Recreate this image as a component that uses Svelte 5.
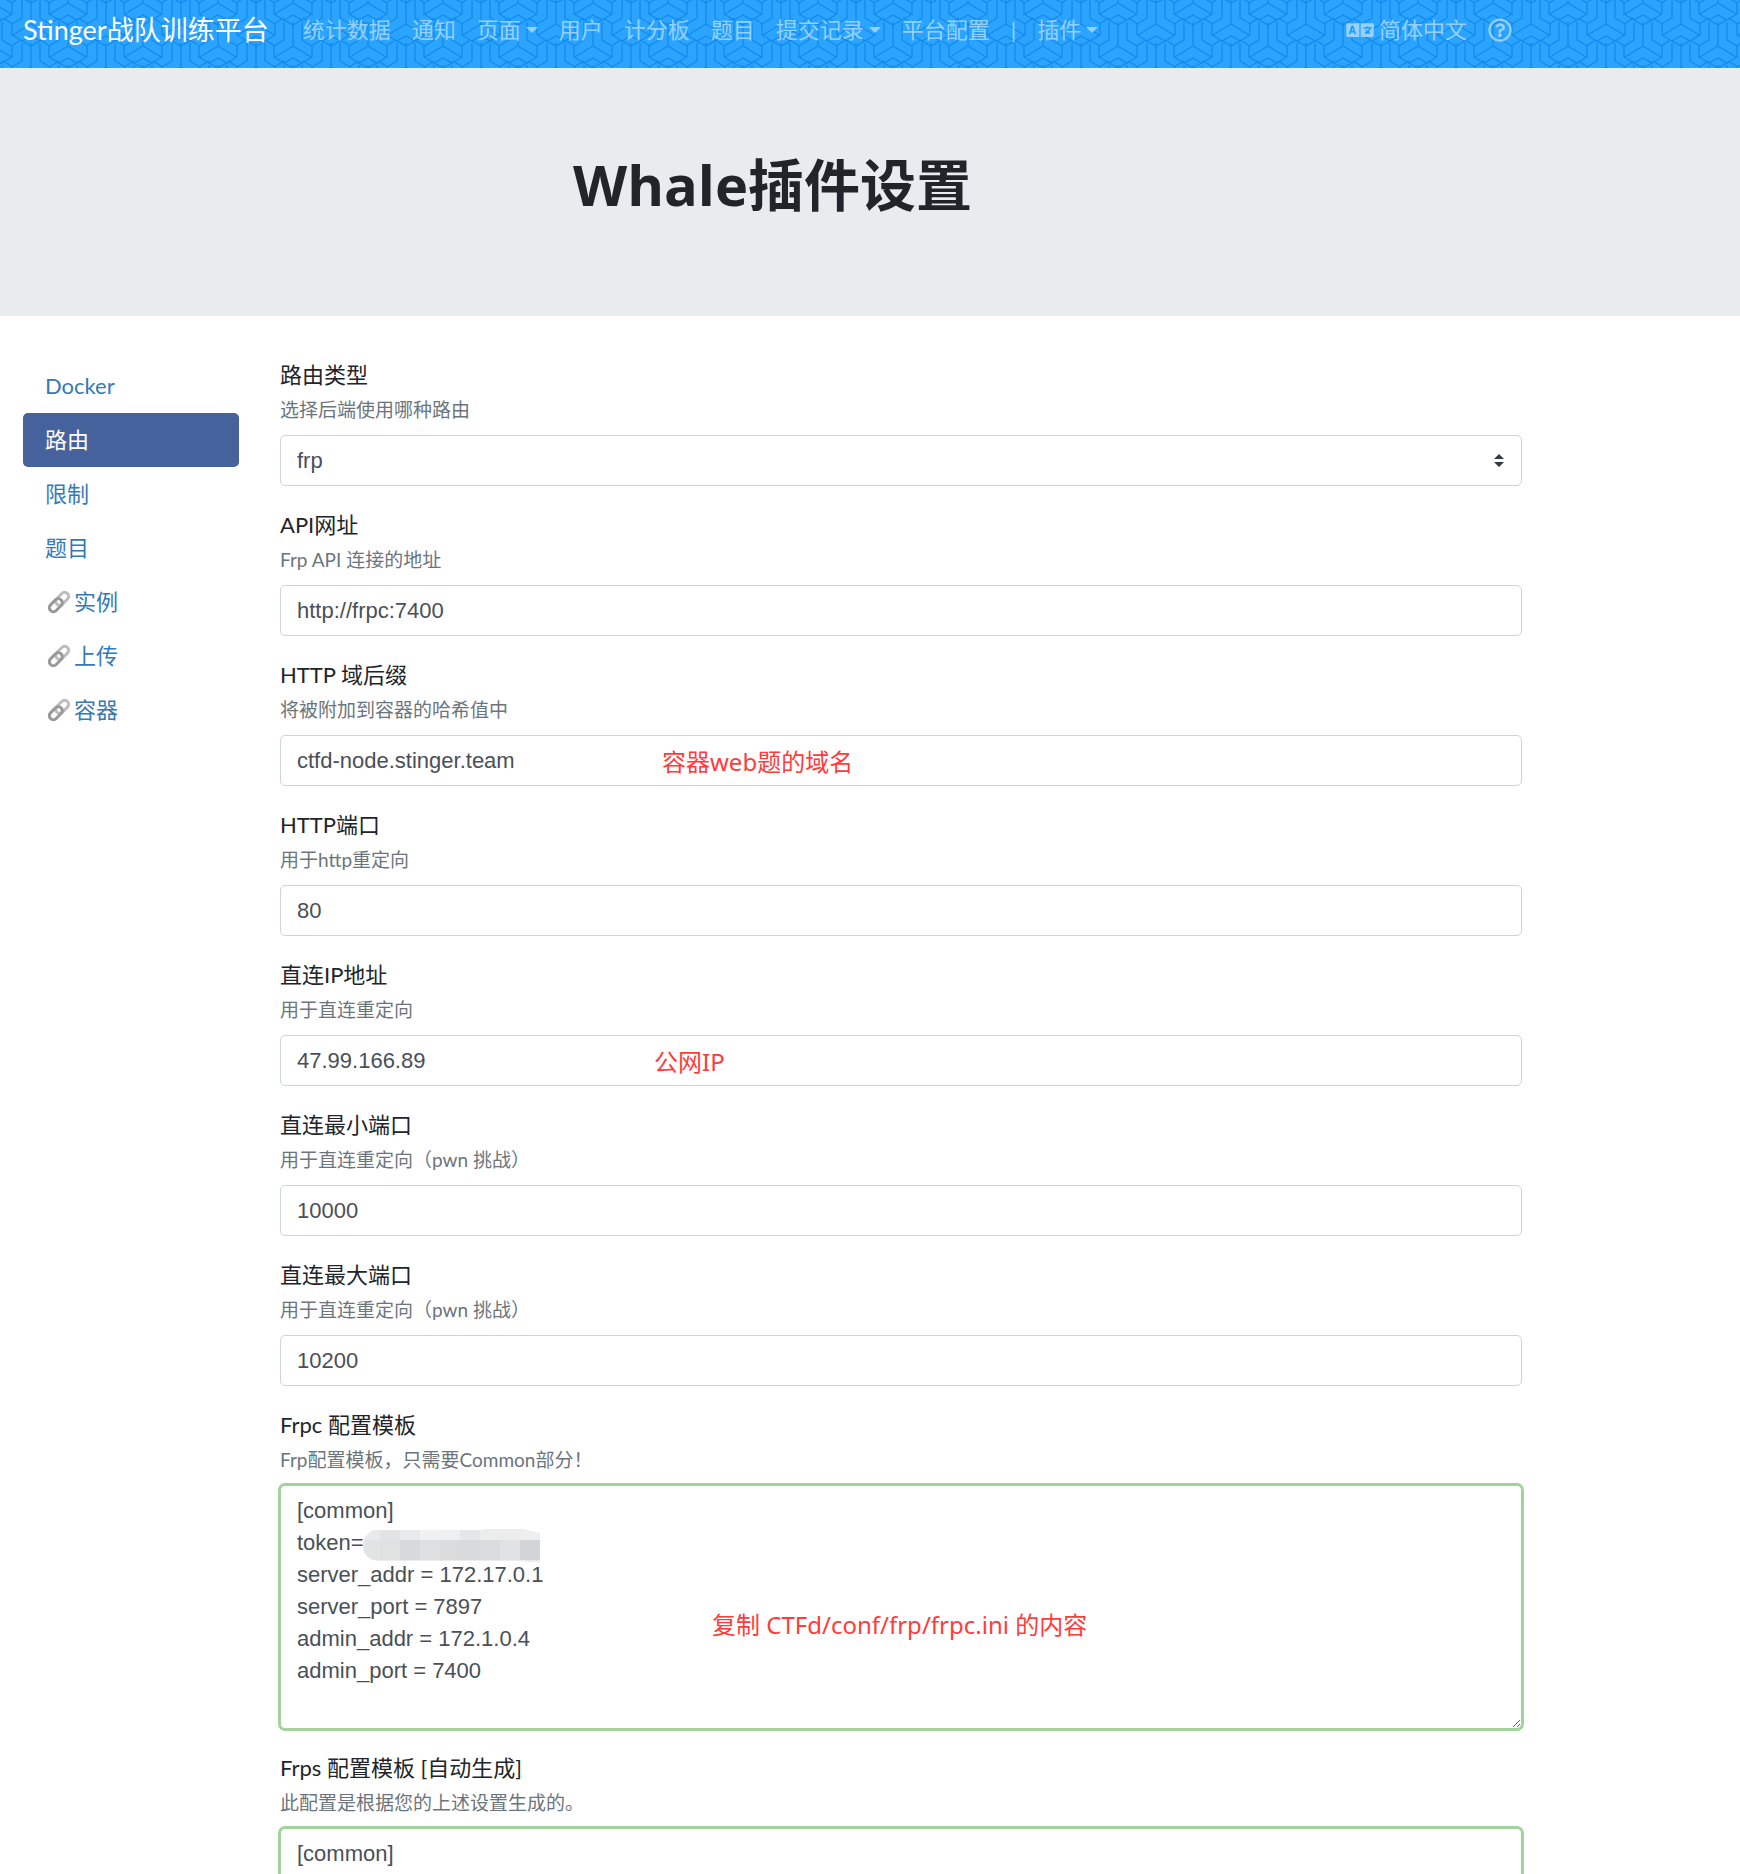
<script>
  const navLinks = [
    { text: '统计数据' },
    { text: '通知' },
    { text: '页面', menu: true },
    { text: '用户' },
    { text: '计分板' },
    { text: '题目' },
    { text: '提交记录', menu: true },
    { text: '平台配置' },
    { text: '|', divider: true },
    { text: '插件', menu: true },
  ];

  const tabs = [
    { text: 'Docker' },
    { text: '路由', active: true },
    { text: '限制' },
    { text: '题目' },
    { text: '实例', external: true },
    { text: '上传', external: true },
    { text: '容器', external: true },
  ];

  const fields = [
    { id: 'api-url', label: 'API网址', help: 'Frp API 连接的地址', value: 'http://frpc:7400' },
    { id: 'http-suffix', label: 'HTTP 域后缀', help: '将被附加到容器的哈希值中', value: 'ctfd-node.stinger.team', note: '容器web题的域名' },
    { id: 'http-port', label: 'HTTP端口', help: '用于http重定向', value: '80' },
    { id: 'direct-ip', label: '直连IP地址', help: '用于直连重定向', value: '47.99.166.89', note: '公网IP' },
    { id: 'port-min', label: '直连最小端口', help: '用于直连重定向（pwn 挑战）', value: '10000' },
    { id: 'port-max', label: '直连最大端口', help: '用于直连重定向（pwn 挑战）', value: '10200' },
  ];

  const frpc = `[common]
token=
server_addr = 172.17.0.1
server_port = 7897
admin_addr = 172.1.0.4
admin_port = 7400
`;

  const frps = `[common]
`;

  // Greys of the redaction mosaic, upper and lower rows
  const upper = ['#e9eaeb', '#e2e3e5', '#e8e9ea', '#f1f1f2', '#eeeff0', '#e5e6e8', '#ebecec', '#ececec', '#eeeeef'];
  const lower = ['#e2e4e4', '#e0e2e2', '#d8d9db', '#dfe0e2', '#dbdbdc', '#d9dadc', '#dbdcde', '#e1e2e4', '#d3d4d6'];
</script>

{#snippet star(x, y)}
  <g transform="translate({x} {y})">
    <path d="M0-24V0L-18 11M0 0L18 11M-9-24V-6L-19 0V11L-9 17M9-24V-6L19 0V11L9 17M-9 17L0 12L9 17L0 22Z" />
    <path d="M-18 0L-28-6M18 0L28-6" />
  </g>
{/snippet}

<header>
  <svg class="pattern" aria-hidden="true">
    <defs>
      <pattern id="weave" width="75" height="43" patternUnits="userSpaceOnUse">
        <g class="lines">
          {#each [-43, 0, 43] as dy}
            {@render star(-7, 3 + dy)}
            {@render star(68, 3 + dy)}
            {@render star(31, 24 + dy)}
            {@render star(106, 24 + dy)}
          {/each}
        </g>
      </pattern>
    </defs>
    <rect width="100%" height="100%" fill="url(#weave)" />
  </svg>
  <nav class="bar">
    <a class="brand" href="#home">Stinger战队训练平台</a>
    <div class="links">
      {#each navLinks as link}
        {#if link.divider}
          <span class="divider">{link.text}</span>
        {:else}
          <a href="#nav">{link.text}{#if link.menu}<i class="caret"></i>{/if}</a>
        {/if}
      {/each}
    </div>
    <div class="links right">
      <a href="#language">
        <svg class="lang" viewBox="0 0 640 512" aria-hidden="true"><path d="M152.1 236.2c-3.5-12.1-7.8-33.2-7.8-33.2h-.5s-4.3 21.1-7.8 33.2l-11.1 37.5H163zM616 96H336v320h280c13.3 0 24-10.7 24-24V120c0-13.3-10.7-24-24-24zm-24 120c0 6.6-5.4 12-12 12h-11.4c-6.9 23.6-21.7 47.4-42.7 69.9 8.4 6.4 17.1 12.5 26.1 18 5.5 3.4 7.3 10.5 4.1 16.2l-7.9 13.9c-3.4 5.9-10.9 7.8-16.7 4.3-12.6-7.8-24.5-16.1-35.4-24.9-10.9 8.7-22.7 17.1-35.4 24.9-5.8 3.5-13.3 1.6-16.7-4.3l-7.9-13.9c-3.2-5.6-1.4-12.8 4.2-16.2 9.3-5.7 18-11.7 26.1-18-7.9-8.4-14.9-17-21-25.7-4-5.7-2.2-13.6 3.7-17.1l6.5-3.9 7.3-4.3c5.4-3.2 12.4-1.7 16 3.4 5 7 10.8 14 17.4 20.9 13.5-14.2 23.8-28.9 30-43.2H412c-6.6 0-12-5.4-12-12v-16c0-6.6 5.4-12 12-12h64v-16c0-6.6 5.4-12 12-12h16c6.6 0 12 5.4 12 12v16h64c6.6 0 12 5.4 12 12zM0 120v272c0 13.3 10.7 24 24 24h280V96H24c-13.3 0-24 10.7-24 24zm58.9 216.1L116.4 167c1.7-4.9 6.2-8.1 11.4-8.1h32.5c5.1 0 9.7 3.3 11.4 8.1l57.5 169.1c2.6 7.8-3.1 15.9-11.4 15.9h-22.9a12 12 0 0 1-11.5-8.6l-9.4-31.9h-60.2l-9.1 31.8c-1.5 5.1-6.2 8.7-11.5 8.7H70.3c-8.2 0-14-8.1-11.4-15.9z" /></svg>
        简体中文
      </a>
      <a href="#help" aria-label="帮助">
        <svg class="help-icon" viewBox="0 0 512 512" aria-hidden="true"><path d="M256 8C119.043 8 8 119.083 8 256c0 136.997 111.043 248 248 248s248-111.003 248-248C504 119.083 392.957 8 256 8zm0 448c-110.532 0-200-89.431-200-200 0-110.495 89.472-200 200-200 110.491 0 200 89.471 200 200 0 110.53-89.431 200-200 200zm107.244-255.2c0 67.052-72.421 68.084-72.421 92.863V300c0 6.627-5.373 12-12 12h-45.647c-6.627 0-12-5.373-12-12v-8.659c0-35.745 27.1-50.034 47.579-61.516 17.561-9.845 28.324-16.541 28.324-29.579 0-17.246-21.999-28.693-39.784-28.693-23.189 0-33.894 10.977-48.942 29.969-4.057 5.12-11.46 6.071-16.666 2.124l-27.824-21.098c-5.107-3.872-6.251-11.066-2.644-16.363C184.846 131.491 214.94 112 261.794 112c49.071 0 101.45 38.304 101.45 88.8zM298 368c0 23.159-18.841 42-42 42s-42-18.841-42-42 18.841-42 42-42 42 18.841 42 42z" /></svg>
      </a>
    </div>
  </nav>
</header>

<section class="hero">
  <h1>Whale插件设置</h1>
</section>

<main>
  <nav class="tabs">
    {#each tabs as tab}
      <a href="#tab" class:active={tab.active}>
        {#if tab.external}
          <svg class="chain" viewBox="0 0 24 24" aria-hidden="true">
            <g transform="rotate(-45 12 12)">
              <rect class="back" x="9" y="8" width="15" height="8" rx="4" />
              <rect class="front" x="0" y="8" width="15" height="8" rx="4" />
            </g>
          </svg>
        {/if}
        {tab.text}
      </a>
    {/each}
  </nav>

  <form>
    <div class="group">
      <label for="router-type">路由类型</label>
      <small>选择后端使用哪种路由</small>
      <div class="control">
        <select id="router-type">
          <option>frp</option>
        </select>
        <svg class="arrows" viewBox="0 0 10 13" aria-hidden="true">
          <path d="M0 5L5 0L10 5ZM0 8H10L5 13Z" />
        </svg>
      </div>
    </div>

    {#each fields as field}
      <div class="group">
        <label for={field.id}>{field.label}</label>
        <small>{field.help}</small>
        <div class="control">
          <input id={field.id} type="text" value={field.value} />
          {#if field.note}
            <span class="note {field.id}">{field.note}</span>
          {/if}
        </div>
      </div>
    {/each}

    <div class="group">
      <label for="frpc-template">Frpc 配置模板</label>
      <small>Frp配置模板，只需要Common部分！</small>
      <div class="control">
        <textarea id="frpc-template" rows="7" value={frpc}></textarea>
        <svg class="mosaic" viewBox="0 0 177 33" aria-hidden="true">
          <clipPath id="smear"><path d="M14 1H120L122 0H160L177 4V33H163L160 32H17C6 32 0 25 0 17C0 8 6 1 14 1Z" /></clipPath>
          <g clip-path="url(#smear)">
            {#each upper as fill, i}
              <rect x={i * 20 - 3} y="0" width="20" height="11" {fill} />
            {/each}
            {#each lower as fill, i}
              <rect x={i * 20 - 3} y="11" width="20" height="20" {fill} />
            {/each}
            <rect x="0" y="31" width="177" height="2" fill="#ececed" />
          </g>
        </svg>
        <span class="note frpc">复制 CTFd/conf/frp/frpc.ini 的内容</span>
      </div>
    </div>

    <div class="group">
      <label for="frps-template">Frps 配置模板 [自动生成]</label>
      <small>此配置是根据您的上述设置生成的。</small>
      <div class="control">
        <textarea id="frps-template" rows="7" value={frps}></textarea>
      </div>
    </div>
  </form>
</main>

<style>
  :global(body) {
    margin: 0;
    background: #fff;
    color: #212529;
    font-family: Lato, 'Noto Sans CJK SC', sans-serif;
    font-size: 22px;
    line-height: 32px;
  }

  a {
    text-decoration: none;
  }

  header {
    position: relative;
    background: #2ba4ff;
    padding: 9px 0 17px;
  }

  .pattern {
    position: absolute;
    inset: 0;
    width: 100%;
    height: 100%;
  }

  .lines {
    fill: none;
    stroke: #1189ee;
    stroke-width: 1.3;
  }

  .bar {
    position: relative;
    display: flex;
    align-items: center;
    box-sizing: border-box;
    max-width: 1545px;
    height: 42px;
    padding: 0 33px 0 23px;
    white-space: nowrap;
  }

  .brand {
    margin-right: 34px;
    color: #fff;
    font-size: 27px;
  }

  .links {
    display: flex;
    align-items: center;
    gap: 21px;
  }

  .links a,
  .divider {
    display: flex;
    align-items: center;
    color: #95d1ff;
  }

  .right {
    margin-left: auto;
  }

  .caret {
    margin-left: 5px;
    border: 6px solid transparent;
    border-top-color: currentColor;
    border-bottom: 0;
  }

  .lang {
    width: 28px;
    height: 22px;
    margin-right: 5px;
    fill: currentColor;
  }

  .help-icon {
    width: 24px;
    height: 24px;
    fill: currentColor;
  }

  .hero {
    background: #e8ecef;
    padding: 84px 0 100px;
  }

  h1 {
    max-width: 1545px;
    margin: 0;
    font-family: 'Open Sans', 'Noto Sans CJK SC', sans-serif;
    font-size: 56px;
    font-weight: 700;
    line-height: 64px;
    text-align: center;
  }

  main {
    display: flex;
    align-items: flex-start;
    gap: 41px;
    box-sizing: border-box;
    max-width: 1545px;
    padding: 43px 23px 0;
  }

  .tabs {
    flex: none;
    width: 216px;
  }

  .tabs a {
    display: flex;
    align-items: center;
    height: 54px;
    padding: 0 22px;
    border-radius: 5px;
    color: #337ab7;
  }

  .tabs .active {
    background: #46629c;
    color: #fff;
  }

  .chain {
    width: 24px;
    height: 24px;
    margin: 0 3px 0 2px;
    fill: none;
    stroke-width: 3;
  }

  .back {
    stroke: #bdbdbd;
  }

  .front {
    stroke: #999;
  }

  form {
    flex: 1;
    min-width: 0;
  }

  .group {
    display: flex;
    flex-direction: column;
    margin-bottom: 23px;
  }

  small {
    margin: 5px 0 11px;
    color: #6c757d;
    font-size: 19px;
    line-height: 28px;
  }

  .control {
    position: relative;
    display: flex;
  }

  input,
  select,
  textarea {
    box-sizing: border-box;
    width: 100%;
    margin: 0;
    border: 1px solid #ced4da;
    border-radius: 5px;
    background: #fff;
    color: #495057;
    font-family: 'Liberation Sans', 'Noto Sans CJK SC', sans-serif;
    font-size: 22px;
    line-height: 32px;
    outline: 0;
  }

  input,
  select {
    height: 51px;
    padding: 0 16px;
    appearance: none;
  }

  textarea {
    padding: 9px 16px;
    border-color: #a3d39c;
    box-shadow: 0 0 0 2px #a3d39c;
    resize: vertical;
  }

  .arrows {
    position: absolute;
    top: 19px;
    right: 18px;
    width: 10px;
    height: 13px;
    fill: #343a40;
    pointer-events: none;
  }

  .note {
    position: absolute;
    top: 11px;
    left: 382px;
    color: #ff3b3b;
    font-family: 'Noto Sans', 'Noto Sans CJK SC', sans-serif;
    font-size: 24px;
    pointer-events: none;
  }

  .direct-ip {
    left: 374px;
  }

  .frpc {
    top: 124px;
    left: 432px;
  }

  .mosaic {
    position: absolute;
    top: 44px;
    left: 83px;
    width: 177px;
    height: 33px;
  }
</style>
